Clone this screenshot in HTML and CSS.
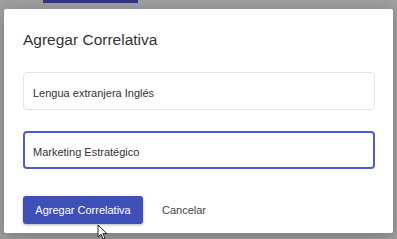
FILE: index.html
```html
<!DOCTYPE html>
<html lang="es">
<head>
<meta charset="utf-8">
<title>Agregar Correlativa</title>
<link rel="stylesheet" href="styles.css">
</head>
<body>
<div class="page">
  <div class="behind-bar"></div>
  <div class="dialog" role="dialog" aria-labelledby="dlg-title">
    <h2 class="dialog-title" id="dlg-title">Agregar Correlativa</h2>
    <div class="field">Lengua extranjera Inglés</div>
    <div class="field field-focused">Marketing Estratégico</div>
    <div class="actions">
      <button class="btn btn-primary" type="button">Agregar Correlativa</button>
      <button class="btn btn-text" type="button">Cancelar</button>
    </div>
  </div>
  <svg class="cursor" width="11" height="16" viewBox="0 0 11 16" aria-hidden="true">
    <path d="M1 1 L1 13 L4 10.2 L6.2 15 L8 14.2 L5.9 9.6 L9.8 9.6 Z" fill="#fff" stroke="#222" stroke-width="1" stroke-linejoin="round"/>
  </svg>
</div>
</body>
</html>
```
FILE: styles.css
```css
html, body {
  margin: 0;
  padding: 0;
}
body {
  width: 397px;
  height: 239px;
  overflow: hidden;
  background: #a0a0a0;
  font-family: "Liberation Sans", Arial, sans-serif;
}
.page {
  position: relative;
  width: 397px;
  height: 239px;
  display: flex;
  flex-direction: column;
}
.behind-bar {
  margin-left: 43px;
  width: 95px;
  height: 3px;
  background: #2f377e;
  flex: none;
}
.dialog {
  margin-top: 6px;
  margin-left: 4px;
  width: 389px;
  height: 224px;
  box-sizing: border-box;
  background: #fff;
  border-radius: 2px;
  box-shadow: 0 4px 18px rgba(0,0,0,0.25);
  padding: 21px 18px 9px 19px;
  display: flex;
  flex-direction: column;
  flex: none;
}
.dialog-title {
  margin: 0 0 22px 0;
  font-size: 15.5px;
  line-height: 20px;
  font-weight: normal;
  color: #333;
}
.field {
  height: 38px;
  box-sizing: border-box;
  border: 1px solid #e3e3e3;
  border-radius: 4px;
  padding: 3px 9px 0 9px;
  display: flex;
  align-items: center;
  font-size: 11px;
  color: #333;
}
.field + .field {
  margin-top: 21px;
}
.field-focused {
  border: 2px solid #4f5ec6;
  padding-left: 8px;
}
.actions {
  margin-top: 27px;
  display: flex;
  align-items: center;
  gap: 19px;
}
.btn {
  font-family: "Liberation Sans", Arial, sans-serif;
  font-size: 11px;
  border: 0;
  padding: 0;
  background: none;
  cursor: pointer;
}
.btn-primary {
  width: 120px;
  height: 28px;
  background: #3f4fb8;
  color: #fff;
  border-radius: 3px;
  box-shadow: 0 1px 3px rgba(0,0,0,0.3);
}
.btn-text {
  color: #444;
  height: 28px;
}
.cursor {
  position: absolute;
  left: 97px;
  top: 224px;
}
```
